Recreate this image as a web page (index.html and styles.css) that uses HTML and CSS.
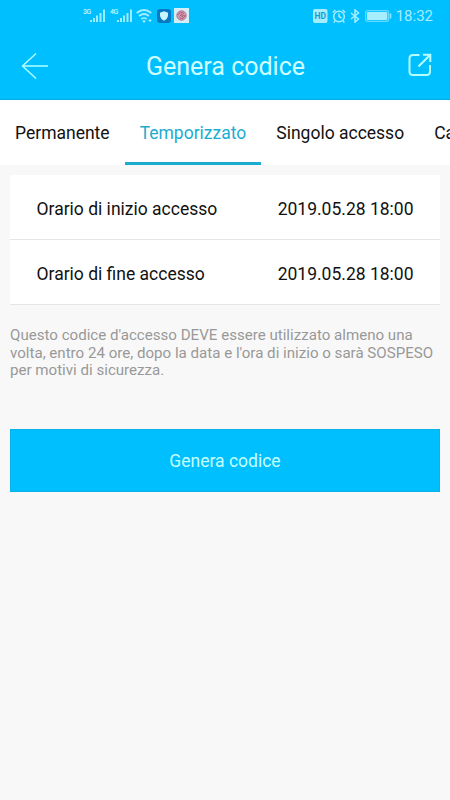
FILE: index.html
```
<!DOCTYPE html>
<html lang="it">
<head>
    <meta charset="UTF-8">
    <meta name="viewport" content="width=device-width, initial-scale=1.0">
    <title>Genera codice</title>
    <link rel="stylesheet" href="styles.css">
</head>
<body>
    <header class="header">
        <!-- Status bar -->
        <div class="status_bar">
            <div class="status_left">
                <svg class="signal" width="23" height="16" viewBox="0 0 23 16">
                    <text x="0" y="6" class="signal_text">3G</text>
                    <path d="M8 14v-2M11 14v-4M14 14V7.500M17.500 14V5M21 14V1.500" />
                </svg>
                <svg class="signal" width="23" height="16" viewBox="0 0 23 16">
                    <text x="0" y="6" class="signal_text">4G</text>
                    <path d="M8 14v-2M11 14v-4M14 14V7.500M17.500 14V5M21 14V1.500" />
                </svg>
                <svg class="wifi" width="17" height="16" viewBox="0 0 17 16">
                    <path d="M.7 5Q8 -1 15.300 5M3 8Q8 4 13 8M5.300 11Q8 9 10.700 11" />
                    <circle cx="8" cy="13.300" r="1.200" />
                    <path class="wifi_arrow" d="M12.500 12.500h3M14 11v3" />
                </svg>
                <svg class="shield" width="14" height="14" viewBox="0 0 14 14">
                    <rect width="14" height="14" rx="3" fill="#0879c0" />
                    <path d="M7 2.200 11 3.800V7Q10.500 10 7 11.800 3.500 10 3 7V3.800Z" fill="#c8f5ff" />
                </svg>
                <svg class="app" width="15" height="15" viewBox="0 0 15 15">
                    <rect width="15" height="15" fill="#d5edf4" />
                    <circle cx="7.500" cy="7.500" r="4.700" fill="#d59eb5" stroke="#a87591" stroke-width="1" />
                    <path d="M4 7Q6 3 10 5.500M11 7Q10 11.500 5.500 10M5.500 8.500Q7 5 9.500 7.500 8 10 7 7.500" fill="none" stroke="#ac526f" />
                </svg>
            </div>
            <div class="status_right">
                <svg class="hd" width="15" height="14" viewBox="0 0 15 14">
                    <rect width="14.500" height="14" rx="2" />
                    <text x="7.200" y="10" text-anchor="middle">HD</text>
                </svg>
                <svg class="status_icon alarm" width="14" height="14" viewBox="0 0 14 14">
                    <circle cx="7" cy="7.500" r="5.300" />
                    <path d="M7 4.500v3l2.500 1.500M.7 3.500 3.500 1M13.300 3.500 10.500 1M3 12l-1.300 1.500M11 12l1.300 1.500" />
                </svg>
                <svg class="status_icon bluetooth" width="10" height="14" viewBox="0 0 10 14">
                    <path d="m1 4 7.500 6L5 13V1l3.500 3L1 10" />
                </svg>
                <svg class="battery" width="27" height="12" viewBox="0 0 27 12">
                    <rect x=".7" y=".7" width="23" height="10.600" rx="2" fill="none" stroke="#65dcff" stroke-width="1.200" />
                    <rect x="2" y="2" width="20.400" height="8" rx="1" fill="#a5edff" />
                    <path d="M25.500 3.500v5" stroke="#8be7ff" stroke-width="1.600" />
                </svg>
                <span class="clock">18:32</span>
            </div>
        </div>

        <!-- Title bar -->
        <div class="title_bar">
            <svg class="back" width="28" height="28" viewBox="0 0 28 28">
                <path d="M27 14H1.500M15 1.500 1.500 14 15 26.500" />
            </svg>
            <h1 class="title">Genera codice</h1>
            <svg class="share" width="24" height="24" viewBox="0 0 24 24">
                <path d="M11.500 2H5Q1.500 2 1.500 5.500v13Q1.500 22 5 22h13.500Q22 22 22 18.500V12M10.500 13.500 22 2M15 1.700h7.300V9" />
            </svg>
        </div>
    </header>

    <nav class="tabs">
        <a class="tab">Permanente</a>
        <a class="tab tab_active">Temporizzato</a>
        <a class="tab">Singolo accesso</a>
        <a class="tab">Cancella</a>
    </nav>

    <main class="content">
        <div class="row">
            <span>Orario di inizio accesso</span>
            <span>2019.05.28 18:00</span>
        </div>
        <div class="row">
            <span>Orario di fine accesso</span>
            <span>2019.05.28 18:00</span>
        </div>

        <p class="note">Questo codice d'accesso DEVE essere utilizzato almeno una<br>volta, entro 24 ore, dopo la data e l'ora di inizio o sarà SOSPESO<br>per motivi di sicurezza.</p>

        <button class="generate">Genera codice</button>
    </main>
</body>
</html>
```
FILE: styles.css
```
* {
    margin: 0;
    padding: 0;
    box-sizing: border-box;
    font-family: Roboto, sans-serif;
}

body {
    height: 100vh;
    background: #f8f8f8;
    color: #111;
    overflow: hidden;
}

/* Header */
.header {
    height: 100px;
    background: #00bfff;
    border-bottom: 1px solid #08addf;
}

.status_bar {
    display: flex;
    justify-content: space-between;
    align-items: center;
    height: 31px;
    padding: 0 17px 0 83px;
}

.status_left,
.status_right {
    display: flex;
    align-items: center;
}

.signal {
    margin-right: 4px;
    fill: none;
    stroke: #9becff;
    stroke-width: 2;
}

.signal_text {
    fill: #c5f5ff;
    stroke: none;
    font-size: 7px;
    font-weight: 500;
    letter-spacing: -0.5px;
}

.wifi {
    margin: 0 4px 0 -1px;
    fill: none;
    stroke: #a5edff;
    stroke-width: 1.7;
}

.wifi circle {
    fill: #a5edff;
    stroke: none;
}

.wifi_arrow {
    stroke-width: 1;
}

.shield {
    margin-right: 3px;
}

.hd {
    margin-right: 4px;
    fill: #a5edff;
}

.hd text {
    fill: #149ed0;
    font-size: 8.500px;
    font-weight: bold;
}

.status_icon {
    fill: none;
    stroke: #a5edff;
    stroke-width: 1.5;
}

.alarm {
    margin-right: 4px;
}

.bluetooth {
    margin-right: 5px;
}

.battery {
    margin-right: 4px;
}

.clock {
    color: #a5edff;
    font-size: 15px;
}

.title_bar {
    display: flex;
    justify-content: space-between;
    align-items: center;
    height: 69px;
    padding: 0 18px 0 21px;
}

.title {
    margin: 1px 6px 0 0;
    color: #d0ffff;
    font-size: 25px;
    font-weight: normal;
}

.back,
.share {
    fill: none;
    stroke: #b5ffff;
}

.back {
    stroke-width: 1.4;
}

.share {
    margin-bottom: 2px;
    stroke-width: 2;
}

/* Tabs */
.tabs {
    display: flex;
    height: 65px;
    background: #fff;
    overflow: hidden;
}

.tab {
    flex-shrink: 0;
    padding: 0 15px;
    line-height: 66px;
    font-size: 17.500px;
}

.tab_active {
    color: #1caccf;
    box-shadow: inset 0 -3px #1caccf;
}

/* Access times */
.content {
    padding: 10px;
}

.row {
    display: flex;
    justify-content: space-between;
    align-items: center;
    height: 65px;
    padding: 3px 26.500px 0 26.500px;
    background: #fff;
    border-bottom: 1px solid #e5e5e5;
    font-size: 17.500px;
}

.note {
    margin-top: 22px;
    color: #989898;
    font-size: 15.100px;
    line-height: 17.500px;
    white-space: nowrap;
}

.generate {
    display: block;
    width: 100%;
    height: 63px;
    margin-top: 49px;
    padding-top: 1px;
    border: 1px solid #0bb2ea;
    background: #00bfff;
    color: #c5ffff;
    font-size: 17.500px;
}
```
